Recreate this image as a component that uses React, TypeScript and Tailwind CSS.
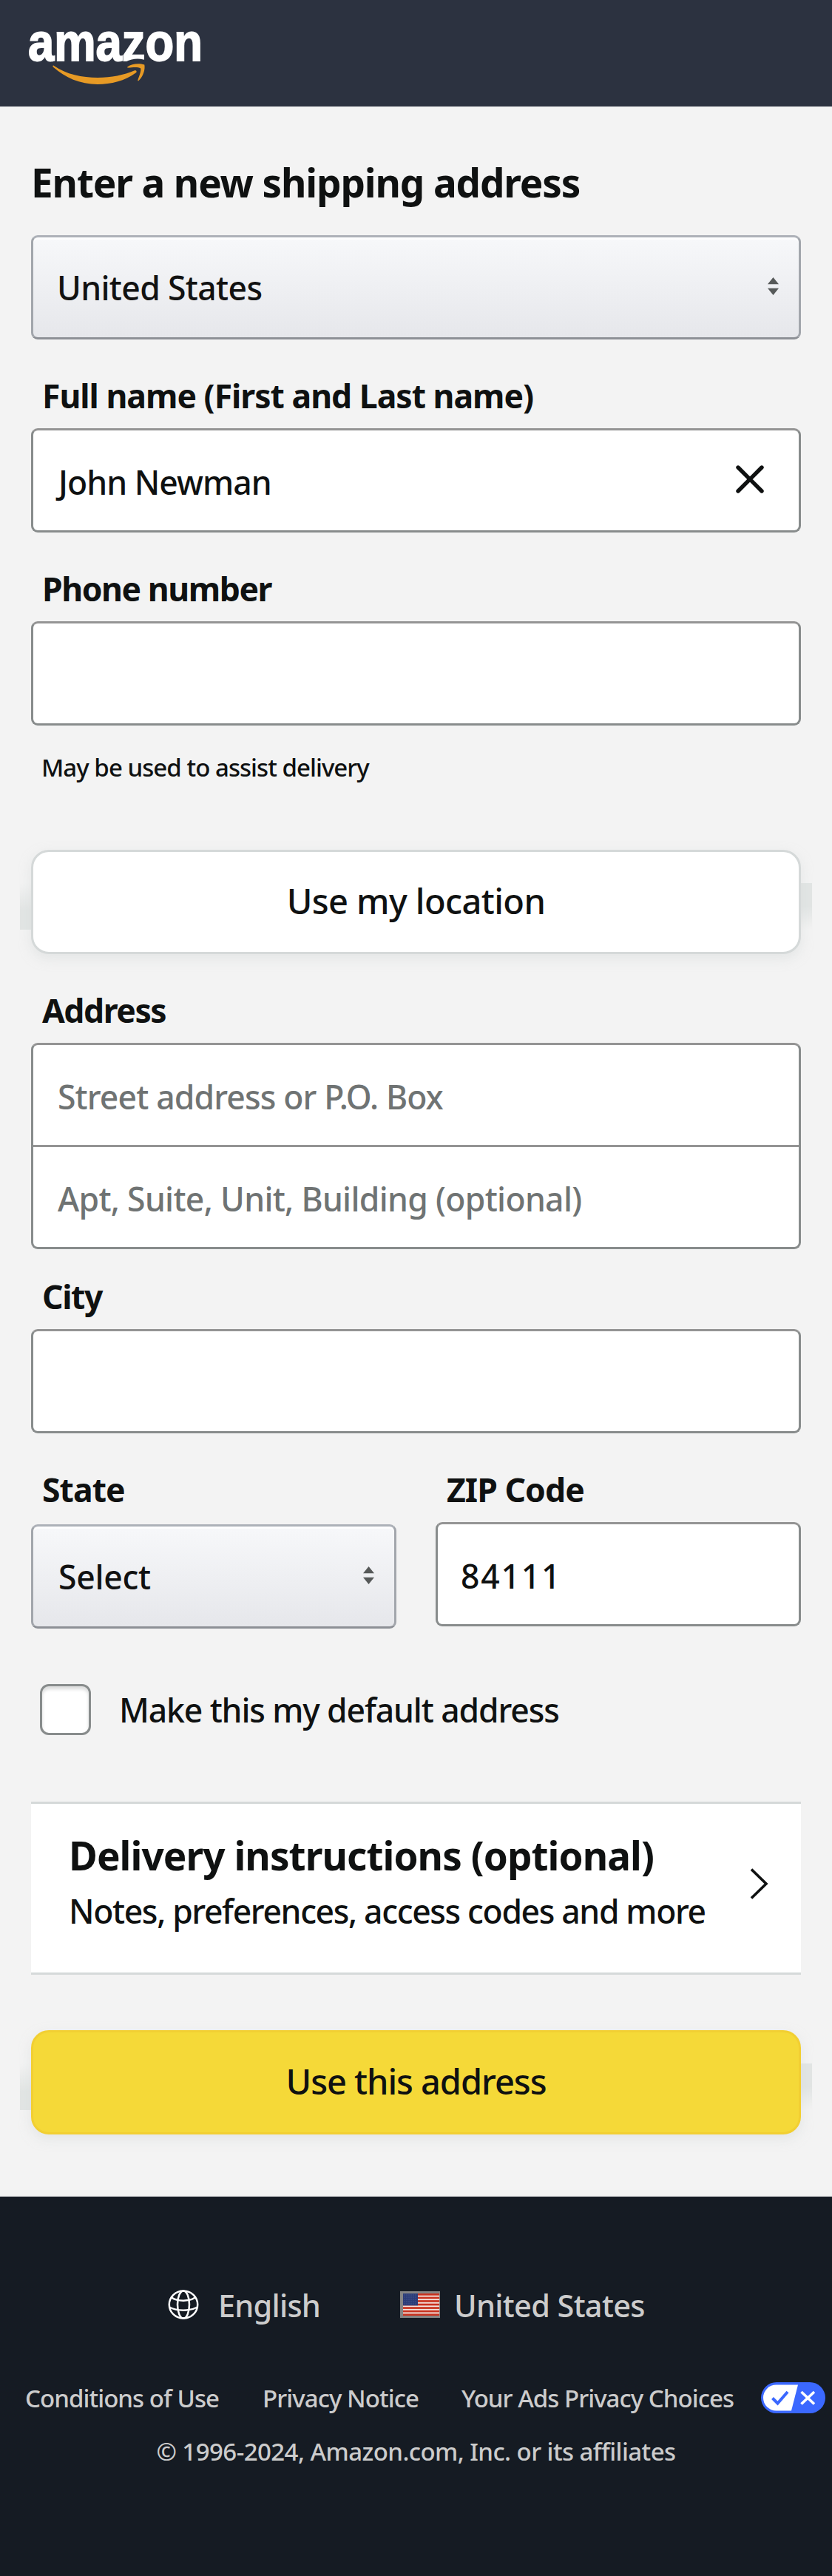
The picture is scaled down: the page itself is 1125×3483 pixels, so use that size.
import type { ReactNode } from "react";

function AmazonLogo() {
  return (
    <svg className="block h-[144px] w-[320px]" viewBox="0 0 320 144" role="img" aria-label="amazon">
      <text
        x="38"
        y="81.8"
        textLength="236"
        lengthAdjust="spacingAndGlyphs"
        fill="#fff"
        stroke="#fff"
        strokeWidth="1.8"
        className="font-['Liberation_Sans',sans-serif] text-[72px] font-bold"
      >
        amazon
      </text>
      <path d="M170 86 L170 83.5 Q186 75.5 202 83.5 L202 86 Z" fill="#2c3240" />
      <path
        d="M72.3 88.6 C90 101 111 105 132 105 C151 105 167 101.5 182 95.3 C184.6 94.6 185.6 97 183.6 98.6 C169 109.5 150 114 132 114 C108 114 88 105 72 90.8 C71 89.6 71.4 88.2 72.3 88.6 Z"
        fill="#e79a25"
      />
      <path
        d="M172.5 90.2 C178 86.3 188 84.8 195.3 87.6 C196.6 94 193.5 103.5 187.6 109 C186.6 109.8 186 109 186.4 108 C188.5 102 191.3 95 190 92.2 C187 90.3 179 90.8 173.6 91.6 C172.2 91.8 171.8 90.8 172.5 90.2 Z"
        fill="#e79a25"
      />
    </svg>
  );
}

function UpDown() {
  return (
    <svg className="h-6 w-[15px]" viewBox="0 0 15 24" fill="#565959">
      <path d="M7.5 0 L15 9.3 H0 Z M7.5 24 L15 14.7 H0 Z" />
    </svg>
  );
}

function Label({ children, tracking }: { children: ReactNode; tracking: string }) {
  return (
    <label className={`block pl-[15px] text-[44.5px] leading-[54px] font-bold whitespace-nowrap ${tracking}`}>
      {children}
    </label>
  );
}

function Select({ children, tracking }: { children: ReactNode; tracking: string }) {
  return (
    <div className="flex h-[141px] items-center justify-between rounded-[9px] border-[3px] border-[#a2a6ac] border-t-[#adb1b8] border-b-[#8d9096] bg-linear-to-b from-[#f7f8fa] to-[#e6e7eb] pr-[27px] pl-8 text-[44.5px] leading-[54px] font-medium text-[#111] shadow-[inset_0_3px_0_rgba(255,255,255,0.7)]">
      <span className={tracking}>{children}</span>
      <span className="pb-[3px]">
        <UpDown />
      </span>
    </div>
  );
}

function Field({ children }: { children?: ReactNode }) {
  return (
    <div className="flex h-[141px] items-center justify-between rounded-[9px] border-[3px] border-[#888c8c] border-t-[#949494] bg-white pl-[31px] text-[44.5px] leading-[54px] font-medium">
      {children}
    </div>
  );
}

function ActionButton({ children, style }: { children: ReactNode; style: string }) {
  return (
    <div className="relative">
      <span className="absolute top-[45px] left-[-15px] h-[63px] w-[15px] bg-linear-to-b from-[#f3f3f3] to-[#e2e5e4] to-60%" />
      <span className="absolute top-[45px] right-[-15px] h-[63px] w-[15px] bg-linear-to-b from-[#e2e5e4] from-50% to-[#f3f3f3]" />
      <button
        className={`relative block h-[141px] w-full rounded-[24px] border-[3px] pb-[3px] text-[47px] leading-[56px] font-medium shadow-[0_6px_15px_rgba(213,217,217,0.5)] ${style}`}
      >
        {children}
      </button>
    </div>
  );
}

function Globe() {
  return (
    <svg className="h-10 w-[42px]" viewBox="0 0 42 40" fill="none" stroke="#fff" strokeWidth="2.5">
      <ellipse cx="21" cy="20" rx="19.2" ry="18.6" />
      <ellipse cx="21" cy="20" rx="8" ry="18.6" />
      <path d="M5 10.5 C13 16 29 16 37 10.5 M2 23.5 C12 29 30 29 40 23.5" />
    </svg>
  );
}

const stripes = [0, 1, 2, 3, 4, 5, 6];
const starRows = [0, 1, 2, 3, 4];

function Flag() {
  return (
    <svg className="h-9 w-[54px]" viewBox="0 0 54 36">
      <rect width="54" height="36" fill="#858585" />
      <rect x="4" y="3" width="49" height="30" fill="#f3e4df" />
      {stripes.map((i) => (
        <rect key={i} x="4" y={3 + i * 4.55} width="49" height="2.7" fill="#c8321f" />
      ))}
      <rect x="4" y="3" width="20" height="16.3" fill="#2b3c78" />
      {starRows.map((i) => (
        <path key={i} d={`M5.5 ${5 + i * 3} H23`} stroke="#5a699c" strokeWidth="1" strokeDasharray="1 2" />
      ))}
    </svg>
  );
}

function PrivacyPill() {
  return (
    <svg className="h-[42px] w-[87px]" viewBox="0 0 87 42" fill="none">
      <rect width="87" height="42" rx="21" fill="#3b68ff" />
      <path d="M20.5 3.5 H50 L41 38.5 H20.5 A17.5 17.5 0 0 1 20.5 3.5 Z" fill="#fff" />
      <path d="M15.5 21.5 L22.5 28.5 L36 13" stroke="#3b68ff" strokeWidth="4" />
      <path d="M54.5 13 L72 29.5 M72 13 L54.5 29.5" stroke="#fff" strokeWidth="3.6" />
    </svg>
  );
}

export default function App() {
  return (
    <div className="h-[3483px] w-[1125px] overflow-hidden bg-[#f3f3f3] font-['Noto_Sans',sans-serif] text-[#0f1111]">
      <header className="h-[144px] bg-[#2c3240]">
        <AmazonLogo />
      </header>

      <main className="h-[2826px] px-[42px] pt-[73px]">
        <h1 className="mb-[41px] text-[53px] leading-[60px] font-bold tracking-[-1.12px] whitespace-nowrap">
          Enter a new shipping address
        </h1>
        <Select tracking="tracking-[-0.64px]">United States</Select>

        <div className="mt-[49px] flex flex-col gap-[17px]">
          <Label tracking="tracking-[-1px]">Full name (First and Last name)</Label>
          <Field>
            <span className="pt-1 pl-[3px] tracking-[-0.95px]">John Newman</span>
            <svg className="mr-[47px] mb-[3px] size-[38px]" viewBox="0 0 38 38" stroke="#0f1111" strokeWidth="5.4" strokeLinecap="round">
              <path d="M3 3 L35 35 M35 3 L3 35" />
            </svg>
          </Field>
        </div>

        <div className="mt-[49px] flex flex-col gap-[17px]">
          <Label tracking="tracking-[-1.44px]">Phone number</Label>
          <Field />
        </div>
        <p className="mt-[36px] mb-[90px] pl-[14px] text-[33px] leading-[42px] font-medium tracking-[-0.95px]">
          May be used to assist delivery
        </p>

        <ActionButton style="border-[#d5d9d9] bg-white tracking-[-0.6px]">Use my location</ActionButton>

        <div className="mt-[49px] flex flex-col gap-[17px]">
          <Label tracking="tracking-[-1.44px]">Address</Label>
          <div className="h-[279px] rounded-[9px] border-[3px] border-[#888c8c] border-t-[#949494] bg-white text-[44.5px] leading-[54px] font-medium text-[#6f7373]">
            <div className="flex h-[138px] items-center border-b-[3px] border-[#949494] pt-1 pl-[33px] tracking-[-0.86px]">
              Street address or P.O. Box
            </div>
            <div className="flex h-[135px] items-center pt-1 pl-[33px] tracking-[-0.68px]">
              Apt, Suite, Unit, Building (optional)
            </div>
          </div>
        </div>

        <div className="mt-[37px] flex flex-col gap-[17px]">
          <Label tracking="tracking-[-1.4px]">City</Label>
          <Field />
        </div>

        <div className="mt-[49px] flex items-start gap-[53px]">
          <div className="flex w-[494px] flex-col gap-5">
            <Label tracking="tracking-[-0.95px]">State</Label>
            <Select tracking="pl-0.5 tracking-[-0.29px]">Select</Select>
          </div>
          <div className="flex w-[494px] flex-col gap-[17px]">
            <Label tracking="tracking-[-0.95px]">ZIP Code</Label>
            <Field>
              <span className="pt-1 tracking-[1.8px]">84111</span>
            </Field>
          </div>
        </div>

        <div className="mt-[75px] flex h-[69px] items-center gap-[38px] pl-3 text-[44.5px] leading-[54px] font-medium tracking-[-1.12px]">
          <span className="size-[69px] rounded-[12px] border-[3px] border-[#888c8c] bg-white shadow-[inset_0_4px_4px_rgba(15,17,17,0.15)]" />
          Make this my default address
        </div>

        <section className="mt-[90px] flex h-[234px] justify-between border-y-[3px] border-[#d5d9d9] bg-white pt-[40px] pr-[43px] pl-[51px]">
          <div className="flex flex-col gap-[18px] whitespace-nowrap">
            <h2 className="text-[53px] leading-[60px] font-bold tracking-[-0.92px]">Delivery instructions (optional)</h2>
            <p className="text-[44.5px] leading-[54px] font-medium tracking-[-1.36px]">
              Notes, preferences, access codes and more
            </p>
          </div>
          <svg className="mt-[47px] h-[42px] w-[26px]" viewBox="0 0 26 42" fill="none" stroke="#0f1111" strokeWidth="3.6">
            <path d="M2 1.5 L22 21 L2 40.5" />
          </svg>
        </section>

        <div className="mt-[75px]">
          <ActionButton style="border-[#f2cf32] bg-[#f5d938] tracking-[-1.05px]">Use this address</ActionButton>
        </div>
      </main>

      <footer className="h-[513px] bg-[#151b23] pt-[121px] font-medium whitespace-nowrap text-[#cccccc]">
        <div className="flex h-[50px] items-center pl-[227px] text-[41.5px] leading-[50px]">
          <Globe />
          <span className="w-[272px] pt-px pl-[26px] tracking-[-0.78px]">English</span>
          <Flag />
          <span className="pt-px pl-[19px] tracking-[-0.66px]">United States</span>
        </div>
        <div className="mt-20 flex h-[42px] items-center pl-[34px] text-[33px] leading-[42px]">
          <span className="w-[321px] pt-0.5 tracking-[-0.94px]">Conditions of Use</span>
          <span className="w-[269px] pt-0.5 tracking-[-0.92px]">Privacy Notice</span>
          <span className="w-[405px] pt-0.5 tracking-[-0.96px]">Your Ads Privacy Choices</span>
          <PrivacyPill />
        </div>
        <p className="mt-[31px] text-center text-[33px] leading-[42px] tracking-[-0.56px]">
          © 1996-2024, Amazon.com, Inc. or its affiliates
        </p>
      </footer>
    </div>
  );
}
